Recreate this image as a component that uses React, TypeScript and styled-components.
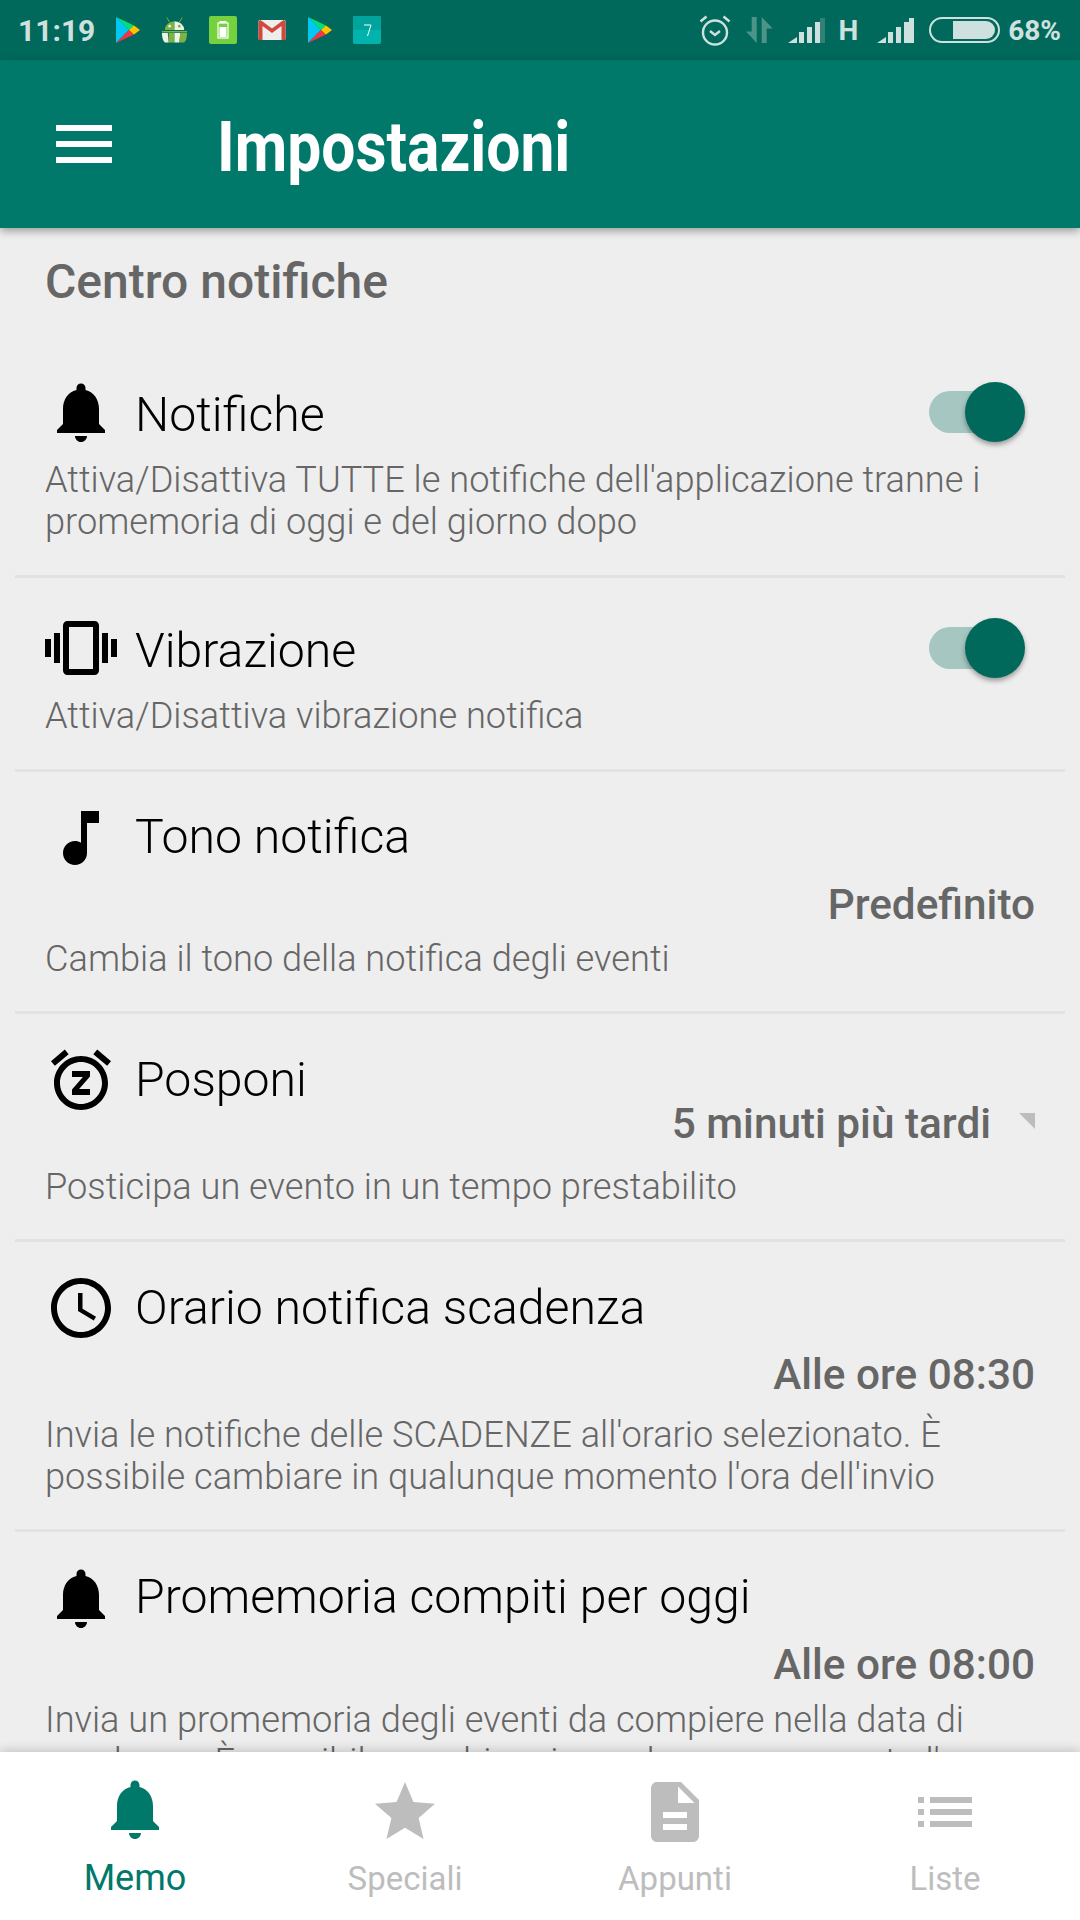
import styled, { createGlobalStyle } from "styled-components";

const GlobalStyle = createGlobalStyle`
    html, body {
        margin: 0;
        padding: 0;
        background: #eeeeee;
    }
`;

const Screen = styled.div`
    width: 1080px;
    height: 1920px;
    display: flex;
    flex-direction: column;
    overflow: hidden;
    font-family: Roboto, "Liberation Sans", sans-serif;
    background: #eeeeee;
`;

const StatusBar = styled.div`
    height: 60px;
    flex: none;
    display: flex;
    align-items: center;
    padding: 0 19px 0 18px;
    background: #00695c;
    color: #cfe1de;
`;

const Clock = styled.span`
    font-size: 30px;
    font-weight: 700;
    width: 97px;
`;

const StatusLeft = styled.div`
    display: flex;
    align-items: center;
    gap: 21px;
    flex: 1;
`;

const StatusRight = styled.div`
    display: flex;
    align-items: center;
    gap: 15px;
`;

const StatusIcon = styled.svg`
    display: block;
    flex: none;
`;

const NetLetter = styled.span`
    font-size: 28px;
    font-weight: 700;
    margin: 0 4px 0 -2px;
`;

const BatteryText = styled.span`
    font-size: 28px;
    font-weight: 700;
    margin-left: -7px;
`;

const AppBar = styled.header`
    height: 168px;
    flex: none;
    display: flex;
    align-items: center;
    padding-left: 56px;
    background: #00796b;
    box-shadow: 0 3px 8px rgba(0, 0, 0, 0.35);
    position: relative;
    z-index: 2;
`;

const Title = styled.h1`
    margin: 5px 0 0 105px;
    font-size: 70px;
    font-weight: 700;
    color: #ffffff;
    transform: scaleX(0.865);
    transform-origin: left center;
`;

const Content = styled.main`
    flex: 1;
    min-height: 0;
    overflow: hidden;
    padding: 0 15px;
`;

const SectionTitle = styled.h2`
    margin: 27px 30px 27px;
    font-size: 48px;
    line-height: 54px;
    font-weight: 500;
    color: #666666;
`;

const Row = styled.section<{ $top: number; $bottom: number; $last?: boolean }>`
    padding: ${(p) => p.$top}px 30px ${(p) => p.$bottom}px;
    border-bottom: ${(p) => (p.$last ? "none" : "3px solid #e2e2e2")};
`;

const RowHead = styled.div`
    display: flex;
    align-items: center;
    height: 72px;
`;

const RowIcon = styled.svg`
    width: 72px;
    height: 72px;
    flex: none;
    fill: #000000;
`;

// the title sits a little off the icon's centre, by a different amount per row
const RowTitle = styled.span<{ $nudge: number }>`
    flex: 1;
    margin: ${(p) => (p.$nudge > 0 ? p.$nudge * 2 : 0)}px 0 ${(p) => (p.$nudge < 0 ? -p.$nudge * 2 : 0)}px 18px;
    font-size: 48.2px;
    font-weight: 300;
    color: #000000;
`;

const Track = styled.div`
    position: relative;
    width: 90px;
    height: 42px;
    border-radius: 21px;
    background: #a5c6c1;
    margin-right: 16px;
`;

const Thumb = styled.div`
    position: absolute;
    right: -6px;
    top: -9px;
    width: 60px;
    height: 60px;
    border-radius: 50%;
    background: #00695c;
    box-shadow: 0 3px 5px rgba(0, 0, 0, 0.35);
`;

const ValueLine = styled.div<{ $before: number; $after: number }>`
    display: flex;
    justify-content: flex-end;
    align-items: center;
    height: 48px;
    margin: ${(p) => p.$before}px 0 ${(p) => p.$after}px;
    font-size: 42.3px;
    font-weight: 500;
    color: #666666;
`;

const Arrow = styled.svg`
    width: 16px;
    height: 16px;
    margin-left: 28px;
    margin-top: -4px;
    fill: #bdbdbd;
`;

const Description = styled.p<{ $gap?: number }>`
    margin: ${(p) => p.$gap ?? 0}px 0 0;
    font-size: 36.2px;
    line-height: 42px;
    font-weight: 300;
    color: #666666;
`;

const BottomNav = styled.nav`
    height: 168px;
    flex: none;
    display: grid;
    grid-template-columns: repeat(4, 1fr);
    background: #ffffff;
    box-shadow: 0 -2px 10px rgba(0, 0, 0, 0.18);
    position: relative;
    z-index: 2;
`;

const NavItem = styled.div<{ $active?: boolean }>`
    display: flex;
    flex-direction: column;
    align-items: center;
    padding-top: 24px;
    color: ${(p) => (p.$active ? "#00796b" : "#bdbdbd")};
`;

const NavIcon = styled.svg<{ $lift?: number }>`
    width: 72px;
    height: 72px;
    fill: currentColor;
    margin-top: ${(p) => -(p.$lift ?? 0)}px;
    margin-bottom: ${(p) => p.$lift ?? 0}px;
`;

const NavLabel = styled.span<{ $active?: boolean }>`
    margin-top: ${(p) => (p.$active ? 10 : 11)}px;
    font-size: ${(p) => (p.$active ? 36 : 33)}px;
    line-height: 40px;
`;

const BELL = "M12 22c1.1 0 2-.9 2-2h-4c0 1.1.89 2 2 2zm6-6v-5c0-3.07-1.64-5.64-4.5-6.32V4c0-.83-.67-1.5-1.5-1.5s-1.5.67-1.5 1.5v.68C7.63 5.36 6 7.92 6 11v5l-2 2v1h16v-1l-2-2z";
const VIBRATION = "M0 15h2V9H0v6zm3 2h2V7H3v10zm19-8v6h2V9h-2zm-3 8h2V7h-2v10zM16.5 3h-9C6.67 3 6 3.67 6 4.5v15c0 .83.67 1.5 1.5 1.5h9c.83 0 1.5-.67 1.5-1.5v-15c0-.83-.67-1.5-1.5-1.5zM16 19H8V5h8v14z";
const NOTE = "M12 3v10.55c-.59-.34-1.27-.55-2-.55-2.21 0-4 1.79-4 4s1.79 4 4 4 4-1.79 4-4V7h4V3h-6z";
const SNOOZE = "M7.88 3.39L6.6 1.86 2 5.71l1.29 1.53 4.59-3.85zM22 5.72l-4.6-3.86-1.29 1.53 4.6 3.86L22 5.72zM12 4c-4.97 0-9 4.03-9 9s4.02 9 9 9c4.97 0 9-4.03 9-9s-4.03-9-9-9zm0 16c-3.87 0-7-3.13-7-7s3.13-7 7-7 7 3.13 7 7-3.13 7-7 7zM9 11h3.63L9 15.2V17h6v-2h-3.63L15 10.8V9H9v2z";
const CLOCK = "M11.99 2C6.47 2 2 6.48 2 12s4.47 10 9.99 10C17.52 22 22 17.52 22 12S17.52 2 11.99 2zM12 20c-4.42 0-8-3.58-8-8s3.58-8 8-8 8 3.58 8 8-3.58 8-8 8zm.5-13H11v6l5.25 3.15.75-1.23-4.5-2.67z";
const STAR = "M12 17.27L18.18 21l-1.64-7.03L22 9.24l-7.19-.61L12 2 9.19 8.63 2 9.24l5.46 4.73L5.82 21z";
const DOC = "M14 2H6c-1.1 0-1.99.9-1.99 2L4 20c0 1.1.89 2 1.99 2H18c1.1 0 2-.9 2-2V8l-6-6zm2 16H8v-2h8v2zm0-4H8v-2h8v2zm-3-5V3.5L18.5 9H13z";
const LIST = "M3 13h2v-2H3v2zm0 4h2v-2H3v2zm0-8h2V7H3v2zm4 4h14v-2H7v2zm0 4h14v-2H7v2zM7 7v2h14V7H7z";

function PlayIcon() {
    return (
        <StatusIcon width="25" height="28" viewBox="0 0 25 28">
            <path d="M1 1 L14 14 L1 27 Z" fill="#00c8f5" />
            <path d="M1 1 L19 9.5 L14 14 Z" fill="#00e07a" />
            <path d="M1 27 L19 18.5 L14 14 Z" fill="#f5344a" />
            <path d="M19 9.5 L25 14 L19 18.5 L14 14 Z" fill="#ffc400" />
        </StatusIcon>
    );
}

function AndroidIcon() {
    return (
        <StatusIcon width="27" height="28" viewBox="0 0 28 28">
            <path d="M6 1l3 5M22 1l-3 5" stroke="#7cb342" strokeWidth="1" fill="none" />
            <path d="M4 14a10 9 0 0 1 10-9v9z" fill="#7cb342" />
            <path d="M14 5a10 9 0 0 1 10 9H14z" fill="#eef3e6" />
            <circle cx="9" cy="10" r="1.4" fill="#eef3e6" />
            <circle cx="19" cy="10" r="1.4" fill="#7cb342" />
            <rect x="1" y="15" width="26" height="1.5" fill="#7cb342" />
            <path d="M1 17h6l1 10H4q-3-3-3-10z" fill="#eef3e6" />
            <path d="M8 17h6v10H8z" fill="#7cb342" />
            <path d="M14 17h6l-1 10h-5z" fill="#eef3e6" />
            <path d="M20 17h7q0 7-3 10h-5z" fill="#7cb342" />
        </StatusIcon>
    );
}

function BatteryAppIcon() {
    return (
        <StatusIcon width="28" height="28" viewBox="0 0 28 28">
            <rect width="28" height="28" rx="2" fill="#76d13f" />
            <rect x="10.5" y="5" width="7" height="2" fill="#ffffff" />
            <rect x="9" y="7" width="10" height="15" fill="none" stroke="#ffffff" strokeWidth="1.2" />
            <rect x="10.5" y="11" width="7" height="10" fill="#ffffff" />
        </StatusIcon>
    );
}

function GmailIcon() {
    return (
        <StatusIcon width="28" height="20" viewBox="0 0 27 20">
            <rect width="27" height="20" rx="1.5" fill="#eeeeee" />
            <path d="M0 1.5 V20 H4 V6 L13.5 13 L23 6 V20 H27 V1.5 L25 0 L13.5 8.5 L2 0 Z" fill="#d2493b" />
        </StatusIcon>
    );
}

function CalendarIcon() {
    return (
        <StatusIcon width="28" height="28" viewBox="0 0 28 28">
            <rect width="28" height="28" rx="2" fill="#00b4ad" />
            <path d="M0 2a2 2 0 0 1 2-2h24a2 2 0 0 1 2 2v12H0z" fill="#00a49c" />
            <path d="M11 9h7l-3.5 11" stroke="#ffffff" strokeWidth="1" fill="none" />
        </StatusIcon>
    );
}

function AlarmIcon() {
    return (
        <StatusIcon width="32" height="32" viewBox="0 0 32 32" fill="none" stroke="#cfe1de">
            <circle cx="16" cy="18.5" r="12" strokeWidth="2.4" />
            <path d="M11 17l5 4 5-4" strokeWidth="2.4" />
            <path d="M1.5 7.5L7.5 2.5M30.5 7.5L24.5 2.5" strokeWidth="2.4" />
        </StatusIcon>
    );
}

function DataArrows() {
    return (
        <StatusIcon width="27" height="26" viewBox="0 0 27 26" fill="#4b9487">
            <path d="M10.7 0V26L0 14.5H5.7V0z" />
            <path d="M15.7 26V0L26.7 11.5H20.7V26z" />
        </StatusIcon>
    );
}

function SignalIcon({ dimLast }: { dimLast?: boolean }) {
    return (
        <StatusIcon width="37" height="25" viewBox="0 0 37 25" fill="#cfe1de">
            <path d="M0 25l9-6v6z" />
            <rect x="11" y="14" width="5" height="11" />
            <rect x="19" y="9" width="5" height="16" />
            <rect x="27" y="4" width="5" height="21" />
            <rect x="32" y="0" width="5" height="25" fill={dimLast ? "#2f8274" : "#cfe1de"} />
        </StatusIcon>
    );
}

function BatteryIcon() {
    return (
        <StatusIcon width="71" height="26" viewBox="0 0 71 26">
            <rect x="1" y="1" width="69" height="24" rx="12" fill="none" stroke="#cfe1de" strokeWidth="2" />
            <path d="M24 4h33a9 9 0 0 1 0 18H24z" fill="#cfe1de" />
        </StatusIcon>
    );
}

function Switch() {
    return (
        <Track>
            <Thumb />
        </Track>
    );
}

export default function App() {
    return (
        <Screen>
            <GlobalStyle />
            <StatusBar>
                <Clock>11:19</Clock>
                <StatusLeft>
                    <PlayIcon />
                    <AndroidIcon />
                    <BatteryAppIcon />
                    <GmailIcon />
                    <PlayIcon />
                    <CalendarIcon />
                </StatusLeft>
                <StatusRight>
                    <AlarmIcon />
                    <DataArrows />
                    <SignalIcon dimLast />
                    <NetLetter>H</NetLetter>
                    <SignalIcon />
                    <BatteryIcon />
                    <BatteryText>68%</BatteryText>
                </StatusRight>
            </StatusBar>
            <AppBar>
                <svg width="56" height="38" viewBox="0 0 56 38" fill="#ffffff">
                    <rect y="0" width="56" height="6" />
                    <rect y="16" width="56" height="6" />
                    <rect y="32" width="56" height="6" />
                </svg>
                <Title>Impostazioni</Title>
            </AppBar>
            <Content>
                <SectionTitle>Centro notifiche</SectionTitle>
                <Row $top={40} $bottom={32}>
                    <RowHead>
                        <RowIcon viewBox="0 0 24 24"><path d={BELL} /></RowIcon>
                        <RowTitle $nudge={2.5}>Notifiche</RowTitle>
                        <Switch />
                    </RowHead>
                    <Description $gap={11}>
                        Attiva/Disattiva TUTTE le notifiche dell'applicazione tranne i promemoria di oggi e del giorno dopo
                    </Description>
                </Row>
                <Row $top={34} $bottom={32}>
                    <RowHead>
                        <RowIcon viewBox="0 0 24 24"><path d={VIBRATION} /></RowIcon>
                        <RowTitle $nudge={2}>Vibrazione</RowTitle>
                        <Switch />
                    </RowHead>
                    <Description $gap={11}>Attiva/Disattiva vibrazione notifica</Description>
                </Row>
                <Row $top={30} $bottom={31}>
                    <RowHead>
                        <RowIcon viewBox="0 0 24 24"><path d={NOTE} /></RowIcon>
                        <RowTitle $nudge={-2}>Tono notifica</RowTitle>
                    </RowHead>
                    <ValueLine $before={6} $after={10}>Predefinito</ValueLine>
                    <Description>Cambia il tono della notifica degli eventi</Description>
                </Row>
                <Row $top={30} $bottom={31}>
                    <RowHead>
                        <RowIcon viewBox="0 0 24 24"><path d={SNOOZE} /></RowIcon>
                        <RowTitle $nudge={-1}>Posponi</RowTitle>
                    </RowHead>
                    <ValueLine $before={-17} $after={19}>
                        5 minuti più tardi
                        <Arrow viewBox="0 0 15 15"><path d="M0 0h15v15z" /></Arrow>
                    </ValueLine>
                    <Description>Posticipa un evento in un tempo prestabilito</Description>
                </Row>
                <Row $top={30} $bottom={31}>
                    <RowHead>
                        <RowIcon viewBox="0 0 24 24"><path d={CLOCK} /></RowIcon>
                        <RowTitle $nudge={-1}>Orario notifica scadenza</RowTitle>
                    </RowHead>
                    <ValueLine $before={6} $after={16}>Alle ore 08:30</ValueLine>
                    <Description>
                        Invia le notifiche delle SCADENZE all'orario selezionato. È possibile cambiare in qualunque momento l'ora dell'invio
                    </Description>
                </Row>
                <Row $top={30} $bottom={31} $last>
                    <RowHead>
                        <RowIcon viewBox="0 0 24 24"><path d={BELL} /></RowIcon>
                        <RowTitle $nudge={-2}>Promemoria compiti per oggi</RowTitle>
                    </RowHead>
                    <ValueLine $before={6} $after={11}>Alle ore 08:00</ValueLine>
                    <Description>
                        Invia un promemoria degli eventi da compiere nella data di scadenza. È possibile cambiare in qualunque momento l'ora dell'invio
                    </Description>
                </Row>
            </Content>
            <BottomNav>
                <NavItem $active>
                    <NavIcon viewBox="0 0 24 24" $lift={3}><path d={BELL} /></NavIcon>
                    <NavLabel $active>Memo</NavLabel>
                </NavItem>
                <NavItem>
                    <NavIcon viewBox="0 0 24 24"><path d={STAR} /></NavIcon>
                    <NavLabel>Speciali</NavLabel>
                </NavItem>
                <NavItem>
                    <NavIcon viewBox="0 0 24 24"><path d={DOC} /></NavIcon>
                    <NavLabel>Appunti</NavLabel>
                </NavItem>
                <NavItem>
                    <NavIcon viewBox="0 0 24 24"><path d={LIST} /></NavIcon>
                    <NavLabel>Liste</NavLabel>
                </NavItem>
            </BottomNav>
        </Screen>
    );
}
